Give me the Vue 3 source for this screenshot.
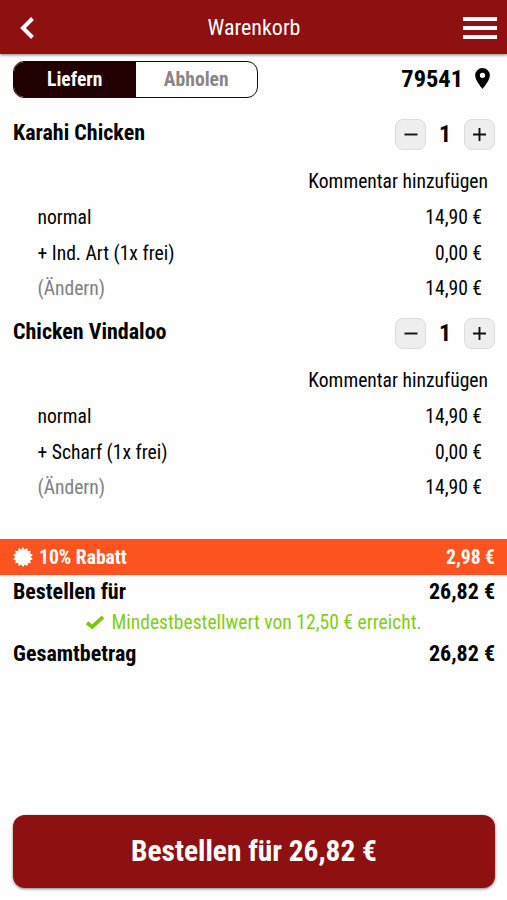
<template>
  <div class="cart-page">
    <header class="topbar">
      <button class="icon-btn back" aria-label="Zurück">
        <svg width="16" height="24" viewBox="0 0 16 24">
          <path d="M13.500 2.500 4 12 13.500 21.500" fill="none" stroke="#fff" stroke-width="4" />
        </svg>
      </button>
      <h1>Warenkorb</h1>
      <button class="icon-btn menu" aria-label="Menü">
        <span></span>
        <span></span>
        <span></span>
      </button>
    </header>

    <div class="delivery">
      <div class="toggle">
        <button :class="{ active: mode === 'liefern' }" @click="mode = 'liefern'">Liefern</button>
        <button :class="{ active: mode === 'abholen' }" @click="mode = 'abholen'">Abholen</button>
      </div>
      <div class="zip">
        <span class="zip-code">79541</span>
        <svg width="15" height="21" viewBox="0 0 14 20">
          <path
            fill="#000"
            fill-rule="evenodd"
            d="M7 0a7 7 0 0 0-7 7c0 5.200 7 13 7 13s7-7.800 7-13a7 7 0 0 0-7-7zm0 9.500a2.500 2.500 0 1 1 0-5 2.500 2.500 0 0 1 0 5z"
          />
        </svg>
      </div>
    </div>

    <section v-for="item in items" :key="item.name" class="item">
      <div class="item-head">
        <h2>{{ item.name }}</h2>
        <div class="stepper">
          <button aria-label="Weniger" @click="item.count > 1 && item.count--">
            <svg width="14" height="14" viewBox="0 0 14 14">
              <path d="M.5 6.500h13" stroke="#111" stroke-width="1.900" />
            </svg>
          </button>
          <span class="count">{{ item.count }}</span>
          <button aria-label="Mehr" @click="item.count++">
            <svg width="14" height="14" viewBox="0 0 14 14">
              <path d="M0 6.500h13M6.500 0v13" stroke="#111" stroke-width="1.900" />
            </svg>
          </button>
        </div>
      </div>
      <div class="comment">Kommentar hinzufügen</div>
      <div class="line">
        <span>normal</span>
        <span>{{ euro(item.price) }}</span>
      </div>
      <div class="line">
        <span>+ {{ item.extra }} (1x frei)</span>
        <span>{{ euro(0) }}</span>
      </div>
      <div class="line">
        <span class="edit">(Ändern)</span>
        <span>{{ euro(item.price * item.count) }}</span>
      </div>
    </section>

    <div class="discount">
      <svg width="20" height="20" viewBox="0 0 20 20">
        <polygon :points="burst" fill="#fff" />
      </svg>
      <span>10% Rabatt</span>
      <span class="amount">{{ euro(discount) }}</span>
    </div>

    <div class="sum">
      <span>Bestellen für</span>
      <span>{{ euro(total) }}</span>
    </div>
    <div class="minimum">
      <svg width="20" height="15" viewBox="0 0 20 15">
        <path d="M2 7.800 7.200 12 18 2" fill="none" stroke="#7cc80f" stroke-width="3.800" />
      </svg>
      <span>Mindestbestellwert von 12,50 € erreicht.</span>
    </div>
    <div class="sum">
      <span>Gesamtbetrag</span>
      <span>{{ euro(total) }}</span>
    </div>

    <button class="order">Bestellen für {{ euro(total) }}</button>
  </div>
</template>

<script setup>
import { computed, ref } from 'vue'

const mode = ref('liefern')

const items = ref([
  { name: 'Karahi Chicken', extra: 'Ind. Art', price: 14.9, count: 1 },
  { name: 'Chicken Vindaloo', extra: 'Scharf', price: 14.9, count: 1 }
])

const subtotal = computed(() => items.value.reduce((sum, i) => sum + i.price * i.count, 0))
const discount = computed(() => subtotal.value * 0.1)
const total = computed(() => subtotal.value - discount.value)

const euro = (value) => value.toFixed(2).replace('.', ',') + ' €'

// star badge with 14 short spikes
const burst = Array.from({ length: 28 }, (_, i) => {
  const r = i % 2 ? 7.8 : 10
  const a = (i * Math.PI) / 14
  return `${(10 + r * Math.sin(a)).toFixed(2)},${(10 - r * Math.cos(a)).toFixed(2)}`
}).join(' ')
</script>

<style>
body {
  margin: 0;
  background: #fff;
}
</style>

<style scoped>
.cart-page {
  display: flex;
  flex-direction: column;
  box-sizing: border-box;
  height: 900px;
  padding-bottom: 12px;
  background: #fefefe;
  color: #000;
  font-family: 'Roboto Condensed', Roboto, sans-serif;
  font-stretch: 75%;
  font-size: 19.6px;
  line-height: 24px;
}
button {
  display: flex;
  align-items: center;
  justify-content: center;
  margin: 0;
  padding: 0;
  border: 0;
  background: none;
  color: inherit;
  font: inherit;
}
.topbar {
  display: flex;
  flex: none;
  align-items: center;
  justify-content: space-between;
  height: 54px;
  padding: 0 10px 0 19px;
  background: #8f1010;
  color: #fff;
  box-shadow: 0 1px 3px rgba(0, 0, 0, 0.5);
}
.topbar h1 {
  margin: 2px 8px 0 0;
  font-size: 22px;
  font-weight: 400;
}
.icon-btn {
  width: 34px;
}
.back {
  justify-content: flex-start;
  padding-top: 2px;
}
.menu {
  flex-direction: column;
  gap: 5px;
  padding-top: 2px;
}
.menu span {
  width: 34px;
  height: 4px;
  background: #fff;
}
.delivery {
  display: flex;
  align-items: center;
  justify-content: space-between;
  height: 37px;
  margin: 7px 17px 21px 13px;
}
.toggle {
  display: flex;
  box-sizing: border-box;
  width: 245px;
  height: 37px;
  overflow: hidden;
  border: 1px solid #240505;
  border-radius: 11px;
  background: #fff;
}
.toggle button {
  flex: 1;
  color: #8a8585;
  font-weight: 700;
}
.toggle .active {
  background: #200000;
  color: #fff;
}
.zip {
  display: flex;
  align-items: center;
  gap: 12px;
  padding-bottom: 2px;
}
.zip-code {
  font-size: 24.4px;
  font-weight: 700;
}
.item {
  height: 199px;
}
.item-head {
  display: flex;
  justify-content: space-between;
  height: 44px;
  padding: 0 12px 0 13px;
}
.item-head h2 {
  margin: 2px 0 0;
  font-size: 22px;
  font-weight: 700;
  line-height: 24px;
}
.stepper {
  display: flex;
  height: 31px;
}
.stepper button {
  box-sizing: border-box;
  width: 31px;
  height: 31px;
  border: 1px solid #dcdcdc;
  border-radius: 8px;
  background: #eee;
}
.count {
  width: 38px;
  font-size: 24px;
  font-weight: 700;
  line-height: 31px;
  text-align: center;
}
.comment {
  height: 37px;
  padding-right: 19px;
  line-height: 38px;
  text-align: right;
}
.line {
  display: flex;
  justify-content: space-between;
  padding: 0 25px 0 37.5px;
  line-height: 35.5px;
}
.edit {
  color: #808080;
}
.discount {
  display: flex;
  flex: none;
  align-items: center;
  height: 36px;
  margin: 22px 0 1px;
  padding: 0 12px 0 13px;
  background: #fd531e;
  color: #fff;
  font-weight: 700;
}
.discount svg {
  margin-right: 6px;
}
.discount span {
  padding-top: 1px;
}
.amount {
  margin-left: auto;
}
.sum {
  display: flex;
  justify-content: space-between;
  padding: 0 12px 0 13px;
  font-size: 22px;
  font-weight: 700;
  line-height: 31px;
}
.minimum {
  display: flex;
  align-items: center;
  justify-content: center;
  gap: 6px;
  height: 31px;
  color: #84cc16;
}
.minimum span {
  padding-top: 1px;
}
.order {
  height: 73px;
  margin: auto 12px 0 13px;
  padding-bottom: 2px;
  border-radius: 12px;
  background: #8f1010;
  color: #fff;
  font-size: 29.4px;
  font-weight: 700;
  box-shadow: 0 1px 3px rgba(0, 0, 0, 0.5);
}
</style>
